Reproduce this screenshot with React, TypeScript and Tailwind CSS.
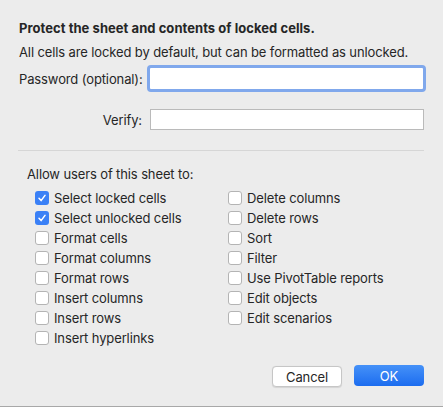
import React from "react";

const left = [
  { label: "Select locked cells", checked: true },
  { label: "Select unlocked cells", checked: true },
  { label: "Format cells" },
  { label: "Format columns" },
  { label: "Format rows" },
  { label: "Insert columns" },
  { label: "Insert rows" },
  { label: "Insert hyperlinks" },
];
const right = [
  { label: "Delete columns" },
  { label: "Delete rows" },
  { label: "Sort" },
  { label: "Filter" },
  { label: "Use PivotTable reports" },
  { label: "Edit objects" },
  { label: "Edit scenarios" },
];

function Check({ label, checked }: { label: string; checked?: boolean }) {
  return (
    <div className="flex h-[20px] items-center">
      {checked ? (
        <div className="flex h-[14px] w-[14px] shrink-0 items-center justify-center rounded-[3px] bg-[#3a80f6]">
          <svg width="10" height="10" viewBox="0 0 10 10" fill="none">
            <path d="M2 5.3 L4.1 7.6 L8 2.4" stroke="white" strokeWidth="1.5" strokeLinecap="round" strokeLinejoin="round" />
          </svg>
        </div>
      ) : (
        <div className="h-[14px] w-[14px] shrink-0 rounded-[3px] border border-[#b4b4b4] bg-white" />
      )}
      <span className="ml-[5px] whitespace-nowrap">{label}</span>
    </div>
  );
}

export default function App() {
  return (
    <div
      className="flex h-[407px] w-[443px] flex-col border-b border-[#a8a8a8] bg-[#ececec] px-[19px] pt-[20px] text-[13px] leading-[16px] tracking-[-0.12px] text-[#262626]"
      style={{ fontFamily: "Inter, 'Liberation Sans', sans-serif" }}
    >
      <p className="whitespace-nowrap font-bold tracking-[0.05px]">Protect the sheet and contents of locked cells.</p>
      <p className="mt-[8px] whitespace-nowrap">All cells are locked by default, but can be formatted as unlocked.</p>
      <div className="mt-[5px] flex h-[27px] items-center">
        <span className="w-[123px] shrink-0 whitespace-nowrap text-right">Password (optional):</span>
        <div className="ml-[5px] h-[27px] w-[279px] shrink-0 rounded-[4px] border-[3px] border-[#80a8ec] bg-white" />
      </div>
      <div className="mt-[17px] flex h-[21px] items-center">
        <span className="w-[123px] shrink-0 whitespace-nowrap text-right">Verify:</span>
        <div className="ml-[8px] h-[21px] w-[274px] shrink-0 border border-[#bababa] bg-white" />
      </div>
      <div className="mt-[20px] ml-[-1px] h-px w-[406px] bg-[#d6d6d6]" />
      <p className="mt-[15px] pl-[8px]">Allow users of this sheet to:</p>
      <div className="mt-[6px] flex pl-[16px]">
        <div className="flex w-[193px] flex-col">
          {left.map((i) => (
            <Check key={i.label} {...i} />
          ))}
        </div>
        <div className="flex flex-col">
          {right.map((i) => (
            <Check key={i.label} {...i} />
          ))}
        </div>
      </div>
      <div className="mt-[17px] flex items-start justify-end gap-[12px]">
        <button className="mt-[1px] h-[21px] w-[70px] rounded-[4px] border border-[#c6c6c6] bg-white text-[13px] text-[#262626] shadow-[0_0.5px_1px_rgba(0,0,0,0.1)]">
          Cancel
        </button>
        <button className="h-[21px] w-[70px] rounded-[4px] bg-gradient-to-b from-[#4591f8] to-[#1b6cef] text-[13px] text-white">
          OK
        </button>
      </div>
    </div>
  );
}
